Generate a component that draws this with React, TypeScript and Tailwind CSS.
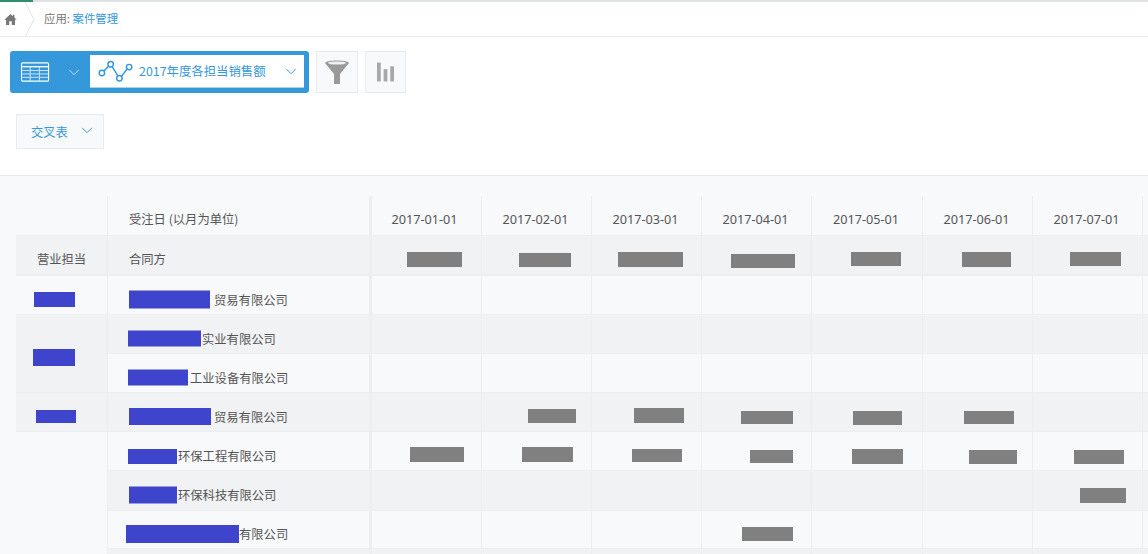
import React from "react";

type Bar = { l: number; t: number; w: number; h: number };
const font = { fontFamily: '"Noto Sans CJK SC", sans-serif' };
const dates = ["2017-01-01", "2017-02-01", "2017-03-01", "2017-04-01", "2017-05-01", "2017-06-01", "2017-07-01", ""];
const colX = [372, 482, 592, 702, 812, 923, 1033, 1143];

const b = (x1: number, x2: number, y1: number, y2: number, col: number, top: number): [number, Bar] => [
  col,
  { l: x1 - colX[col], t: y1 - top, w: x2 - x1, h: y2 - y1 },
];

const rows: {
  h: number;
  alt: boolean;
  owner?: { l: number; w: number; h: number; t: number; span: number; alt: boolean };
  name: { l: number; w: number; h: number; t: number; gap: number; text: string };
  bars: [number, Bar][];
}[] = [
  {
    h: 39, alt: false,
    owner: { l: 18, t: 16, w: 41, h: 15, span: 1, alt: false },
    name: { l: 21, t: 15, w: 81, h: 18, gap: 4, text: "贸易有限公司" },
    bars: [],
  },
  {
    h: 39, alt: true,
    owner: { l: 17, t: 34, w: 42, h: 17, span: 2, alt: true },
    name: { l: 20, t: 16, w: 73, h: 16, gap: 1, text: "实业有限公司" },
    bars: [],
  },
  {
    h: 39, alt: false,
    name: { l: 20, t: 16, w: 60, h: 16, gap: 2, text: "工业设备有限公司" },
    bars: [],
  },
  {
    h: 39, alt: true,
    owner: { l: 20, t: 17, w: 40, h: 13, span: 1, alt: true },
    name: { l: 21, t: 15, w: 82, h: 17, gap: 3, text: "贸易有限公司" },
    bars: [
      b(528, 576, 409, 423, 1, 393),
      b(634, 684, 408, 423, 2, 393),
      b(741, 793, 411, 424, 3, 393),
      b(853, 902, 411, 425, 4, 393),
      b(964, 1014, 411, 424, 5, 393),
    ],
  },
  {
    h: 39, alt: false,
    owner: { l: 0, t: 0, w: 0, h: 0, span: 4, alt: false },
    name: { l: 20, t: 17, w: 49, h: 15, gap: 1, text: "环保工程有限公司" },
    bars: [
      b(410, 464, 447, 462, 0, 432),
      b(522, 573, 447, 462, 1, 432),
      b(632, 682, 449, 462, 2, 432),
      b(750, 793, 450, 463, 3, 432),
      b(852, 903, 449, 464, 4, 432),
      b(969, 1017, 450, 464, 5, 432),
      b(1074, 1124, 450, 464, 6, 432),
    ],
  },
  {
    h: 40, alt: true,
    name: { l: 21, t: 16, w: 48, h: 17, gap: 1, text: "环保科技有限公司" },
    bars: [b(1080, 1126, 488, 503, 6, 471)],
  },
  {
    h: 38, alt: false,
    name: { l: 18, t: 14, w: 113, h: 18, gap: 0, text: "有限公司" },
    bars: [b(742, 793, 527, 541, 3, 511)],
  },
  {
    h: 39, alt: true,
    name: { l: 18, t: 14, w: 0, h: 0, gap: 0, text: "" },
    bars: [],
  },
];

const headerBars: [number, Bar][] = [
  b(407, 462, 252, 267, 0, 236),
  b(519, 571, 253, 267, 1, 236),
  b(618, 683, 252, 267, 2, 236),
  b(731, 795, 254, 268, 3, 236),
  b(851, 901, 252, 266, 4, 236),
  b(962, 1011, 252, 267, 5, 236),
  b(1070, 1121, 252, 266, 6, 236),
];

function Chevron({ className }: { className: string }) {
  return (
    <svg viewBox="0 0 12 8" className={className} fill="none" stroke="currentColor" strokeWidth="1.1">
      <path d="M0.5 1 L6 6.5 L11.5 1" />
    </svg>
  );
}

function GrayBar({ bar }: { bar: Bar }) {
  return (
    <div
      className="bg-[#808080]"
      style={{ marginLeft: bar.l, width: bar.w, height: bar.h, transform: `translateY(${bar.t}px)` }}
    />
  );
}

function DataCells({ alt, bars, h }: { alt: boolean; bars: [number, Bar][]; h: number }) {
  return (
    <>
      {dates.map((_, i) => {
        const found = bars.find((x) => x[0] === i);
        return (
          <div
            key={i}
            className={`border-r border-b border-[#eceef0] ${i === 0 ? "border-l-2" : ""} ${alt ? "bg-[#f1f2f4]" : ""}`}
            style={{ height: h }}
          >
            {found && <GrayBar bar={found[1]} />}
          </div>
        );
      })}
    </>
  );
}

export default function App() {
  const grid = "grid grid-cols-[92px_262px_112px_110px_110px_110px_111px_110px_110px_110px]";
  return (
    <div className="h-[554px] w-[1148px] overflow-hidden bg-white flex flex-col text-[#555]" style={font}>
      <div className="h-[2px] bg-[#dfe3e3] flex shrink-0">
        <div className="w-[33px] bg-[#2f8f6b]" />
      </div>
      <div className="h-[35px] shrink-0 border-b border-[#e9ecee] flex items-center relative">
        <svg viewBox="0 0 14 14" className="ml-[4px] w-[13px] h-[13px] text-[#777]" fill="currentColor">
          <path d="M7 1 L9.6 3.4 V1.8 H11.2 V4.9 L13.6 7.2 H11.8 V13 H8.4 V9 H5.6 V13 H2.2 V7.2 H0.4 Z" />
        </svg>
        <svg viewBox="0 0 12 36" className="absolute left-[24px] top-0 w-[12px] h-[35px]" fill="none" stroke="#dfe3e3">
          <path d="M1 0 L10 18 L1 36" />
        </svg>
        <div className="ml-[27px] text-[11.4px] leading-none text-[#777]">
          应用: <span className="text-[#3498db]">案件管理</span>
        </div>
      </div>

      <div className="h-[139px] shrink-0 border-b border-[#e6e9eb] flex flex-col">
        <div className="flex items-start mt-[14px] ml-[10px]">
          <div className="w-[299px] h-[42px] bg-[#3498db] rounded-[3px] flex items-start">
            <div className="w-[80px] h-[42px] flex items-center text-white">
              <svg viewBox="0 0 30 20" className="ml-[11px] w-[29px] h-[20px]" fill="none" stroke="currentColor" strokeWidth="1">
                <rect x="0.5" y="0.5" width="28" height="19" rx="1" strokeWidth="1.2" />
                <path d="M1 4.5 H28" strokeWidth="1.4" />
                <path d="M1 8.5 H28 M1 12 H28 M1 15.5 H28 M9.5 4 V19 M19 4 V19" stroke="#cfe6f6" />
              </svg>
              <Chevron className="ml-[18px] w-[12px] h-[7px] text-[#cfe6f6]" />
            </div>
            <div className="mt-[4px] w-[214px] h-[33px] bg-white border-b border-[#a9d2ef] flex items-center text-[#3498db]">
              <svg viewBox="0 0 36 22" className="ml-[8px] w-[35px] h-[22px]" fill="none" stroke="currentColor" strokeWidth="1.5">
                <circle cx="4" cy="13" r="2.8" />
                <circle cx="13" cy="4" r="2.8" />
                <circle cx="22" cy="18.5" r="2.8" />
                <circle cx="32" cy="7" r="2.8" />
                <path d="M6 11 L11 6 M14.5 6.5 L20.5 16 M24 16.5 L30 9" />
              </svg>
              <span className="ml-[6px] text-[12.4px] leading-none whitespace-nowrap">2017年度各担当销售额</span>
              <Chevron className="ml-[19px] w-[12px] h-[7px]" />
            </div>
          </div>
          <div className="ml-[7px] w-[42px] h-[42px] bg-[#f7f9fa] border border-[#e9ecee] flex items-center justify-center">
            <svg viewBox="0 0 26 26" className="w-[26px] h-[26px]" fill="#9a9a9a">
              <path d="M1 4 C1 0.5 25 0.5 25 4 L16 15 V25 H10 V15 Z" />
              <ellipse cx="13" cy="4" rx="9" ry="1.6" fill="#f0f0f0" />
            </svg>
          </div>
          <div className="ml-[7px] w-[41px] h-[42px] bg-[#f7f9fa] border border-[#e9ecee] flex items-center justify-center">
            <svg viewBox="0 0 18 20" className="w-[17px] h-[20px]" fill="#a8a8a8">
              <rect x="0" y="0" width="4" height="20" />
              <rect x="7" y="7" width="4" height="13" />
              <rect x="14" y="4" width="4" height="16" />
            </svg>
          </div>
        </div>
        <div className="mt-[21px] ml-[16px] w-[88px] h-[35px] bg-[#f7f9fa] border border-[#e9ecee] flex items-center text-[#3498db]">
          <span className="ml-[14px] text-[12.3px] leading-none pt-[2px]">交叉表</span>
          <Chevron className="ml-[13px] w-[12px] h-[7px] -translate-y-[1px]" />
        </div>
      </div>

      <div className="flex-1 bg-[#f8f9fb] pt-[20px] pl-[16px] overflow-hidden text-[12.3px] leading-none">
        <div className={`${grid} auto-rows-min w-[1200px]`}>
          {/* header row */}
          <div className="h-[40px] border-r border-b border-[#eceef0]" />
          <div className="h-[40px] border-r border-b border-[#eceef0] flex items-center pl-[21px] pt-[8px]">受注日 (以月为单位)</div>
          {dates.map((d, i) => (
            <div
              key={i}
              className={`h-[40px] border-r border-b border-[#eceef0] flex items-center justify-center pt-[8px] text-[#555] text-[12.7px] ${i === 0 ? "border-l-2 pr-[4px]" : "pr-[2px]"}`}
              style={{ fontFamily: '"Noto Sans", sans-serif' }}
            >
              {d}
            </div>
          ))}
          {/* field row */}
          <div className="h-[40px] bg-[#f1f2f4] border-r border-b-2 border-[#eceef0] flex items-center justify-center pt-[8px]">营业担当</div>
          <div className="h-[40px] bg-[#f1f2f4] border-r border-b-2 border-[#eceef0] flex items-center pl-[21px] pt-[8px]">合同方</div>
          {dates.map((_, i) => {
            const found = headerBars.find((x) => x[0] === i);
            return (
              <div key={i} className={`h-[40px] bg-[#f1f2f4] border-r border-b-2 border-[#eceef0] ${i === 0 ? "border-l-2" : ""}`}>
                {found && <GrayBar bar={found[1]} />}
              </div>
            );
          })}
          {/* body */}
          {rows.map((r, idx) => (
            <React.Fragment key={idx}>
              {r.owner && (
                <div
                  className={`border-r border-[#eceef0] ${r.owner.span === 4 ? "" : "border-b"} ${r.owner.alt ? "bg-[#f1f2f4]" : ""} ${
                    r.owner.span === 2 ? "row-span-2" : r.owner.span === 4 ? "row-span-4" : ""
                  }`}
                >
                  {r.owner.w > 0 && (
                    <div
                      className="bg-[#3e45cc]"
                      style={{
                        marginLeft: r.owner.l,
                        width: r.owner.w,
                        height: r.owner.h,
                        transform: `translateY(${r.owner.t}px)`,
                      }}
                    />
                  )}
                </div>
              )}
              <div
                className={`border-r border-b border-[#eceef0] flex items-center ${r.alt ? "bg-[#f1f2f4]" : ""}`}
                style={{ height: r.h, paddingLeft: r.name.l }}
              >
                {r.name.w > 0 && (
                  <div
                    className="bg-[#3e45cc] shrink-0"
                    style={{
                      width: r.name.w,
                      height: r.name.h,
                      marginRight: r.name.gap,
                      transform: `translateY(${r.name.t - (r.h - r.name.h) / 2}px)`,
                    }}
                  />
                )}
                <span className="whitespace-nowrap pt-[10px]">{r.name.text}</span>
              </div>
              <DataCells alt={r.alt} bars={r.bars} h={r.h} />
            </React.Fragment>
          ))}
        </div>
      </div>
    </div>
  );
}
